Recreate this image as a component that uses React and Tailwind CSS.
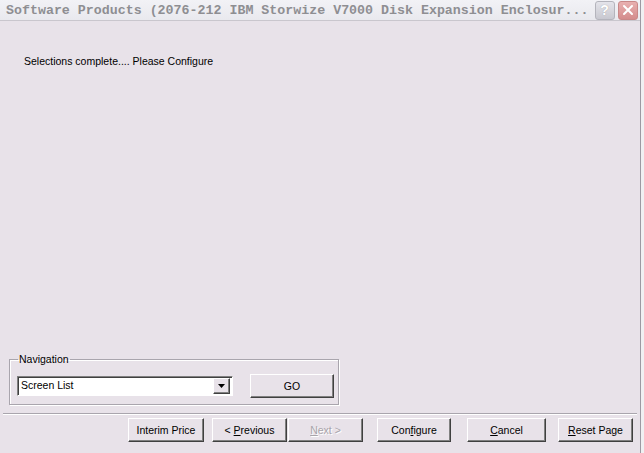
import React from 'react'

const raised =
  'border-t border-l border-t-white border-l-white border-r border-b border-r-[#404040] border-b-[#404040] shadow-[inset_-1px_-1px_0_#808080]'

const WinButton = ({ children, className = '', disabled = false }) => (
  <button
    className={`${raised} h-[24px] bg-[#e8e2e9] text-[10.5px] leading-none ${
      disabled ? 'text-[#a8a4aa] [text-shadow:1px_1px_0_#fff]' : 'text-black'
    } ${className}`}
  >
    {children}
  </button>
)

export default function App() {
  return (
    <div className="w-[644px] h-[453px] flex bg-[#f4f4f6] font-['Liberation_Sans',sans-serif] overflow-hidden">
      <div className="w-[641px] h-full flex flex-col bg-[#e8e2e9] border-r border-[#9c99a2]">
        {/* Title bar */}
        <div className="h-[21px] flex items-center bg-gradient-to-b from-[#f2f2f6] to-[#e9e9ee] border-b border-[#c9c6cd] pl-[6px] pr-[3px]">
          <span className="flex-1 text-[13.3px] font-bold text-[#8e8e92] font-['Liberation_Mono',monospace] whitespace-nowrap leading-none pt-[1px]">
            Software Products (2076-212 IBM Storwize V7000 Disk Expansion Enclosur...
          </span>
          <div className="flex gap-[3px] ml-[6px]">
            <div className="w-[20px] h-[19px] rounded-[3px] bg-gradient-to-b from-[#e4e4ea] to-[#c8c8d0] border border-[#b4b4bc] flex items-center justify-center text-white text-[14px] font-bold leading-none [text-shadow:0_0_1px_#999]">
              ?
            </div>
            <div className="w-[20px] h-[19px] rounded-[3px] bg-gradient-to-b from-[#e8b0b0] to-[#d48c8c] border border-[#c88888] flex items-center justify-center">
              <svg width="12" height="12" viewBox="0 0 12 12">
                <path d="M2 2 L10 10 M10 2 L2 10" stroke="#fff" strokeWidth="2" strokeLinecap="round" />
              </svg>
            </div>
          </div>
        </div>

        {/* Body */}
        <div className="flex-1 flex flex-col">
          <p className="mt-[34px] ml-[24px] text-[10.5px] leading-[13px] text-black">
            Selections complete.... Please Configure
          </p>

          <div className="flex-1" />

          {/* Navigation group */}
          <fieldset className="ml-[9px] w-[330px] border border-[#a9a5ad] shadow-[inset_1px_1px_0_#fff,1px_1px_0_#fff] pl-[7px] pr-[4px] pt-[8px] pb-[6px] flex">
            <legend className="ml-[1px] px-[1px] text-[10.5px] leading-[13px] text-black">Navigation</legend>
            <div className="flex items-center gap-[17px]">
              <div className="w-[216px] h-[20px] bg-white border-t border-l border-t-[#808080] border-l-[#808080] border-r border-b border-r-white border-b-white shadow-[inset_1px_1px_0_#404040] flex items-center pl-[3px] pr-[2px]">
                <span className="flex-1 text-[10.5px] text-black">Screen List</span>
                <div className={`${raised} w-[17px] h-[16px] bg-[#e8e2e9] flex items-center justify-center`}>
                  <svg width="7" height="4" viewBox="0 0 7 4">
                    <path d="M0 0 H7 L3.5 4 Z" fill="#000" />
                  </svg>
                </div>
              </div>
              <WinButton className="w-[84px] h-[23px]">GO</WinButton>
            </div>
          </fieldset>

          <div className="mt-[8px] mx-[3px] h-[2px] border-t border-[#a9a5ad] border-b border-b-white" />

          {/* Wizard buttons */}
          <div className="h-[38px] flex items-start pt-[3px] pl-[128px]">
            <WinButton className="w-[76px]">Interim Price</WinButton>
            <WinButton className="w-[75px] ml-[8px]">
              &lt; <span className="underline">P</span>revious
            </WinButton>
            <WinButton className="w-[75px] ml-[1px]" disabled>
              <span className="underline">N</span>ext &gt;
            </WinButton>
            <WinButton className="w-[74px] ml-[14px]">
              Con<span className="underline">f</span>igure
            </WinButton>
            <WinButton className="w-[79px] ml-[16px]">
              <span className="underline">C</span>ancel
            </WinButton>
            <WinButton className="w-[75px] ml-[12px]">
              <span className="underline">R</span>eset Page
            </WinButton>
          </div>
        </div>
      </div>
      <div className="flex-1 bg-[#f0f0f2]" />
    </div>
  )
}
